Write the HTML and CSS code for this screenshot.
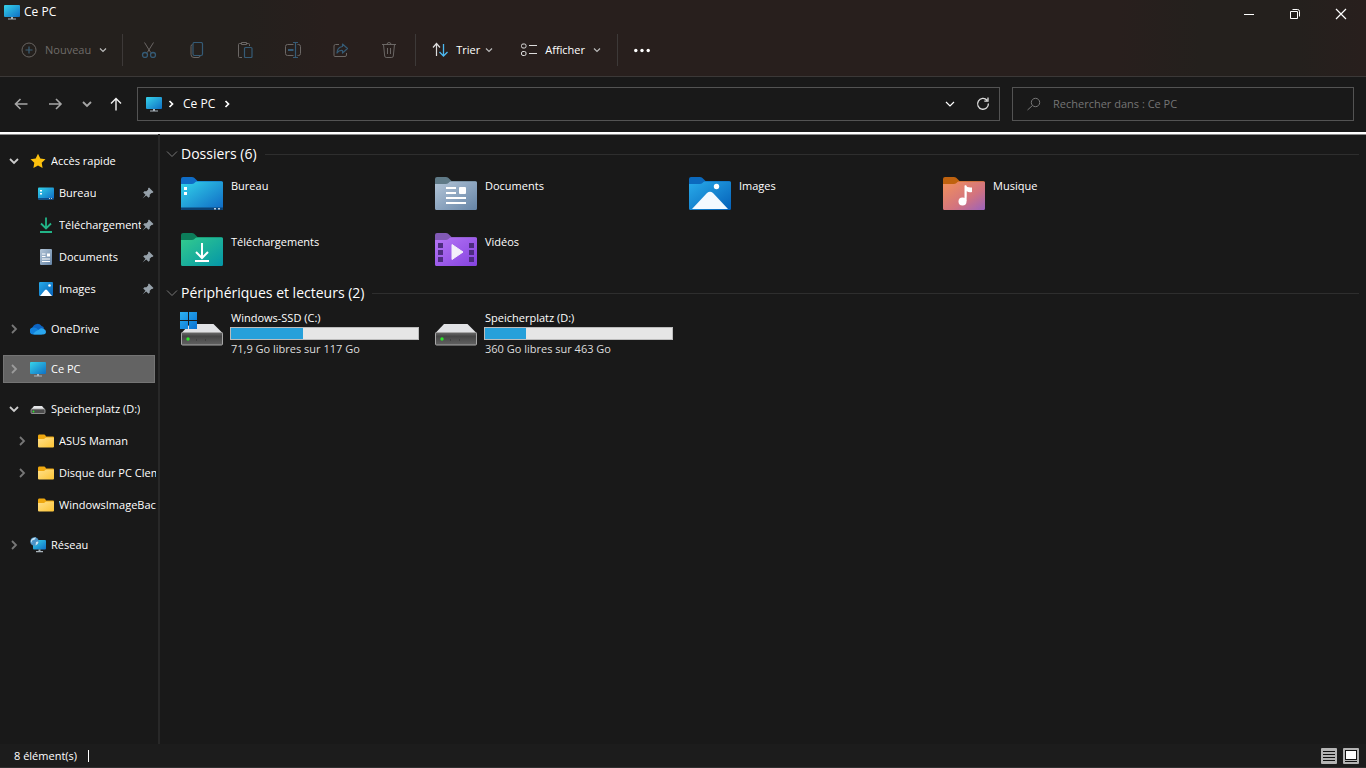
FILE: index.html
```html
<!DOCTYPE html>
<html lang="fr">
<head>
<meta charset="utf-8">
<meta name="viewport" content="width=device-width, initial-scale=1">
<title>Ce PC</title>
<link rel="stylesheet" href="styles.css">
</head>
<body>
<svg class="sprite" aria-hidden="true">
  <defs>
    <linearGradient id="g-screen" x1="0" y1="0" x2="1" y2="1"><stop offset="0" stop-color="#37d3ea"/><stop offset="1" stop-color="#0f6fc4"/></linearGradient>
    <linearGradient id="g-desk" x1="0" y1="0" x2="1" y2="1"><stop offset="0" stop-color="#33d3ea"/><stop offset="1" stop-color="#0f68c4"/></linearGradient>
    <linearGradient id="g-down" x1="0" y1="0" x2="1" y2="1"><stop offset="0" stop-color="#33cb8d"/><stop offset="1" stop-color="#0496a8"/></linearGradient>
    <linearGradient id="g-doc" x1="0" y1="0" x2="1" y2="1"><stop offset="0" stop-color="#b4c6d8"/><stop offset="1" stop-color="#6584a6"/></linearGradient>
    <linearGradient id="g-img" x1="0" y1="0" x2="1" y2="1"><stop offset="0" stop-color="#28abea"/><stop offset="1" stop-color="#0560b8"/></linearGradient>
    <linearGradient id="g-music" x1="0" y1="0" x2="1" y2="1"><stop offset="0" stop-color="#f3925a"/><stop offset=".6" stop-color="#d2737f"/><stop offset="1" stop-color="#9a62bd"/></linearGradient>
    <linearGradient id="g-video" x1="0" y1="0" x2="1" y2="1"><stop offset="0" stop-color="#b575f5"/><stop offset="1" stop-color="#8543e0"/></linearGradient>
    <linearGradient id="g-folder" x1="0" y1="0" x2="1" y2="1"><stop offset="0" stop-color="#ffe08a"/><stop offset="1" stop-color="#fcc435"/></linearGradient>
    <linearGradient id="g-disk" x1="0" y1="0" x2="0" y2="1"><stop offset="0" stop-color="#6a6a6a"/><stop offset=".3" stop-color="#454545"/><stop offset="1" stop-color="#626262"/></linearGradient>
    <linearGradient id="g-win" x1="0" y1="0" x2="1" y2="1"><stop offset="0" stop-color="#2cb0ef"/><stop offset="1" stop-color="#0872d4"/></linearGradient>
  </defs>
  <symbol id="pc" viewBox="0 0 16 16"><rect y="1" width="16" height="12" rx="1" fill="url(#g-screen)"/><path d="M7 13h2v1.500h3v1H4v-1h3z" fill="#aab4bb"/></symbol>
  <symbol id="chev-small" viewBox="0 0 12 12"><path d="M3 4.500l3 3 3-3" fill="none" stroke="currentColor" stroke-width="1.200"/></symbol>
  <symbol id="chev-down" viewBox="0 0 12 12"><path d="M2 4l4 4 4-4" fill="none" stroke="currentColor" stroke-width="1.200"/></symbol>
  <symbol id="chev-bold" viewBox="0 0 12 12"><path d="M2 4l4 4 4-4" fill="none" stroke="currentColor" stroke-width="1.800"/></symbol>
  <symbol id="chev-right" viewBox="0 0 12 12"><path d="M4 2l4 4-4 4" fill="none" stroke="currentColor" stroke-width="1.800"/></symbol>
  <symbol id="chev-crumb" viewBox="0 0 12 12"><path d="M4.500 3 7.500 6l-3 3" fill="none" stroke="currentColor" stroke-width="1.700"/></symbol>
  <symbol id="chev-wide" viewBox="0 0 12 12"><path d="M1 3.500l5 5 5-5" fill="none" stroke="currentColor"/></symbol>
  <symbol id="pin" viewBox="0 0 12 12"><path d="M7 .5 11.500 5l-1.200 1-.8-.1-1.800 1.800.1 1.900L6.600 10.800 4.200 8.500.5 11.600 3.500 7.800 1.200 5.400 2.400 4.200l2 .1L6.200 2.500 6 1.600z" fill="#96a1aa"/></symbol>
  <symbol id="folder" viewBox="0 0 16 16"><path d="M0 3q0-1.500 1-1.500h5q1 0 1.500 1L8 3.500h7q1 0 1 1v2H0z" fill="#efa80f"/><path d="M0 6h6l2-1.500h7.500q.5 0 .5.500v8.500q0 1-1 1H1q-1 0-1-1z" fill="url(#g-folder)"/></symbol>
  <symbol id="disk" viewBox="0 0 48 37"><path d="M12 13h23.500l9.500 9.500H3z" fill="#e1e2e5"/><rect x="3.500" y="21.500" width="41" height="12.500" rx="1" fill="url(#g-disk)" stroke="#a7a7a7"/><circle cx="10" cy="28" r="1.700" fill="#2ee52c"/><path d="M18 29h1m8 0h1" stroke="#333"/></symbol>
</svg>

<header class="chrome">
  <div class="titlebar">
    <h1 class="title"><svg class="i16" aria-hidden="true"><use href="#pc"/></svg>Ce PC</h1>
    <div class="window-buttons">
      <button type="button" aria-label="Réduire"><svg class="i16" viewBox="0 0 16 16"><path d="M3 8.500h10" stroke="#fff"/></svg></button>
      <button type="button" aria-label="Niveau inférieur"><svg class="i16" viewBox="0 0 16 16"><path d="M3.500 5.500h7v7h-7zM5.500 3.500h5q2 0 2 2v5" fill="none" stroke="#fff" stroke-linejoin="round"/></svg></button>
      <button type="button" aria-label="Fermer"><svg class="i16" viewBox="0 0 16 16"><path d="M3 3l10 10M13 3 3 13" stroke="#fff" stroke-width="1.200"/></svg></button>
    </div>
  </div>
  <div class="commands" role="toolbar" aria-label="Commandes">
    <button type="button" class="cmd new" disabled><svg class="i16" viewBox="0 0 16 16"><circle cx="8" cy="8" r="7" fill="none" stroke="#686461"/><path d="M4.500 8h7M8 4.500v7" stroke="#3d6178" stroke-width="1.200"/></svg><span>Nouveau</span><svg class="i12"><use href="#chev-small"/></svg></button>
    <span class="sep"></span>
    <div class="tools">
      <button type="button" class="tool" disabled aria-label="Couper"><svg class="i16" viewBox="0 0 16 16" fill="none"><path d="M3.500.5l6.200 10M12.500.5l-6.200 10" stroke="#6b6765"/><circle cx="4" cy="13" r="2.500" stroke="#355b76" stroke-width="1.300"/><circle cx="12" cy="13" r="2.500" stroke="#355b76" stroke-width="1.300"/></svg></button>
      <button type="button" class="tool" disabled aria-label="Copier"><svg class="i16" viewBox="0 0 16 16" fill="none"><path d="M3.500 2.500q-1.500 0-1.500 2v8q0 3 3 3h4q2 0 2-1.500" stroke="#6b6765"/><rect x="4" y=".5" width="9.500" height="13" rx="1.500" stroke="#355b76" stroke-width="1.200"/></svg></button>
      <button type="button" class="tool" disabled aria-label="Coller"><svg class="i16" viewBox="0 0 16 16" fill="none"><path d="M5 15.500H2.500q-1 0-1-1v-12q0-1 1-1h2m5 0h2q1 0 1 1V4M4.500.5h5v2h-5z" stroke="#6b6765"/><rect x="7.500" y="5.500" width="7.500" height="10" rx="1" stroke="#355b76" stroke-width="1.200"/></svg></button>
      <button type="button" class="tool" disabled aria-label="Renommer"><svg class="i16" viewBox="0 0 16 16" fill="none"><path d="M8.500 2.500h-6q-2 0-2 2v7q0 2 2 2h6m4-11h1q2 0 2 2v7q0 2-2 2h-1" stroke="#6b6765"/><path d="M3 8h5.500" stroke="#355b76" stroke-width="2"/><path d="M8 .5h5m-5 15h5M10.500.5v15" stroke="#355b76" stroke-width="1.200"/></svg></button>
      <button type="button" class="tool" disabled aria-label="Partager"><svg class="i16" viewBox="0 0 16 16" fill="none"><path d="M6 2.500H2.500q-1.500 0-1.500 1.500v9.500q0 1 1 1h10q1.500 0 1.500-1.500v-2" stroke="#6b6765"/><path d="M9.500 2l5 4.500-5 4.500V8.500Q6 8 4 11q0-5.500 5.500-6.500z" stroke="#355b76" stroke-width="1.200" stroke-linejoin="round"/></svg></button>
      <button type="button" class="tool" disabled aria-label="Supprimer"><svg class="i16" viewBox="0 0 16 16" fill="none"><path d="M1 2.500h14M2.500 2.500l1.200 11.500q.2 1.500 1.500 1.500h5.600q1.300 0 1.500-1.500l1.200-11.500M6 2.500q0-2 2-2t2 2M6.500 6v6m3-6v6" stroke="#6b6765"/></svg></button>
    </div>
    <span class="sep"></span>
    <button type="button" class="cmd sort"><svg class="i16" viewBox="0 0 16 16" fill="none"><path d="M1 5.500l3.500-4L8 5.500M4.500 2v12" stroke="#ddd" stroke-width="1.200"/><path d="M7.500 10l4 4L15.500 10M11.500 2v12" stroke="#4cb8f0" stroke-width="1.300"/></svg><span>Trier</span><svg class="i12"><use href="#chev-small"/></svg></button>
    <button type="button" class="cmd view"><svg class="i16" viewBox="0 0 16 16" fill="none" stroke="#ddd"><rect x=".5" y="2" width="4.500" height="4" rx="1.500"/><rect x=".5" y="9.500" width="4.500" height="4" rx="1.500"/><path d="M8 3.500h8M8 11.500h8"/></svg><span>Afficher</span><svg class="i12"><use href="#chev-small"/></svg></button>
    <span class="sep"></span>
    <button type="button" class="cmd more" aria-label="Voir plus"><svg class="i16" viewBox="0 0 16 16" fill="#fff"><circle cx="1.800" cy="8.500" r="1.700"/><circle cx="8" cy="8.500" r="1.700"/><circle cx="14.200" cy="8.500" r="1.700"/></svg></button>
  </div>
</header>

<nav class="navbar" aria-label="Navigation">
  <div class="history">
    <button type="button" class="wide" aria-label="Précédent"><svg class="i16" viewBox="0 0 16 16" fill="none" stroke="#a6a6a6" stroke-width="1.600"><path d="M7.500 3 2.500 8l5 5M2.500 8h12"/></svg></button>
    <button type="button" class="wide" aria-label="Suivant"><svg class="i16" viewBox="0 0 16 16" fill="none" stroke="#a6a6a6" stroke-width="1.600"><path d="M9 3l5 5-5 5M2 8h12"/></svg></button>
    <button type="button" class="dim" aria-label="Emplacements récents"><svg class="i12"><use href="#chev-bold"/></svg></button>
    <button type="button" aria-label="Dossier parent"><svg class="i16" viewBox="0 0 16 16" fill="none" stroke="#f2f2f2" stroke-width="1.400"><path d="M3 7.500l5-5 5 5M8 2.500v12"/></svg></button>
  </div>
  <div class="address">
    <svg class="i16" aria-hidden="true"><use href="#pc"/></svg>
    <svg class="i12 crumb-sep" aria-hidden="true"><use href="#chev-crumb"/></svg>
    <a class="crumb" href="#">Ce PC</a>
    <svg class="i12 crumb-sep" aria-hidden="true"><use href="#chev-crumb"/></svg>
    <span class="spacer"></span>
    <button type="button" aria-label="Historique"><svg class="i12"><use href="#chev-down"/></svg></button>
    <button type="button" aria-label="Actualiser"><svg class="i16" viewBox="0 0 16 16" fill="none" stroke="#ddd" stroke-width="1.300"><path d="M12 4.200A5.400 5.400 0 1 0 13.400 7.500M13 1.500v3.700H9.300"/></svg></button>
  </div>
  <label class="search"><svg class="i16" viewBox="0 0 16 16" fill="none" stroke="#777" aria-hidden="true"><circle cx="9.500" cy="6.500" r="4.200"/><path d="M6.500 9.500 1.500 14"/></svg><input type="search" aria-label="Rechercher" placeholder="Rechercher dans : Ce PC"></label>
</nav>

<div class="body">
  <aside class="sidebar">
    <ul class="tree">
      <li><div class="row"><button type="button" class="exp open" aria-label="Réduire"><svg class="i12"><use href="#chev-bold"/></svg></button><a href="#"><svg class="i16" viewBox="0 0 16 16"><path d="M8 .8l2.300 4.700 5.200.7-3.800 3.600.9 5.200L8 12.500 3.400 15l.9-5.200L.5 6.200l5.200-.7z" fill="#fcc10e"/></svg><span>Accès rapide</span></a></div>
        <ul>
          <li><div class="row"><a href="#"><svg class="i16" viewBox="0 0 16 16"><rect y="2.500" width="16" height="12" rx="1" fill="url(#g-desk)"/><path d="M2 5h2v1.500H2zm0 3h2v1.500H2z" fill="#fff"/><path d="M0 13h16v.5q0 1-1 1H1q-1 0-1-1z" fill="#0d4f8f"/><path d="M11 13h1v1h-1zm2 0h1v1h-1z" fill="#ccc"/></svg><span>Bureau</span></a><svg class="pin"><use href="#pin"/></svg></div></li>
          <li><div class="row"><a href="#"><svg class="i16" viewBox="0 0 16 16" fill="none" stroke="#22b487" stroke-width="1.800"><path d="M8 .5V11M3 6.500l5 5 5-5M2 15h12"/></svg><span>Téléchargements</span></a><svg class="pin"><use href="#pin"/></svg></div></li>
          <li><div class="row"><a href="#"><svg class="i16" viewBox="0 0 16 16"><rect x="2" width="12" height="16" rx="1" fill="url(#g-doc)"/><path d="M4 5h3.500M4 7.500h3.500M4 10h8M4 12.500h8" stroke="#fff" stroke-width="1.200"/><path d="M9 4.500h3v3H9z" fill="#fff"/></svg><span>Documents</span></a><svg class="pin"><use href="#pin"/></svg></div></li>
          <li><div class="row"><a href="#"><svg class="i16" viewBox="0 0 16 16"><rect x="1" y="1" width="14" height="14" rx="1" fill="url(#g-img)"/><path d="M2 15l5-6q1-1 2 0l5 6z" fill="#fff"/><circle cx="11.500" cy="4.500" r="1.300" fill="#fff"/></svg><span>Images</span></a><svg class="pin"><use href="#pin"/></svg></div></li>
        </ul></li>
      <li><div class="row"><button type="button" class="exp" aria-label="Développer"><svg class="i12"><use href="#chev-right"/></svg></button><a href="#"><svg class="i16" viewBox="0 0 16 16"><path d="M3 11a4 4 0 0 1 0-5.500 5 5 0 0 1 8.500-.5q2 .3 2.700 2.500z" fill="#0d63c0"/><path d="M3.500 13.500A3.500 3.500 0 0 1 3 6.500q3-.5 5 2l4 5z" fill="#1180dc"/><path d="M4.500 13.500 3 13q2-3 6-4.500 2-2 4.500-.8Q16 8.500 16 10.800q0 2.700-3 2.700z" fill="#2aa6ee"/></svg><span>OneDrive</span></a></div></li>
      <li><div class="row selected" aria-current="page"><button type="button" class="exp" aria-label="Développer"><svg class="i12"><use href="#chev-right"/></svg></button><a href="#"><svg class="i16"><use href="#pc"/></svg><span>Ce PC</span></a></div></li>
      <li><div class="row"><button type="button" class="exp open" aria-label="Réduire"><svg class="i12"><use href="#chev-bold"/></svg></button><a href="#"><svg class="i16" viewBox="0 0 16 16"><path d="M4 5h8l3 3.500H1z" fill="#e4e5e7"/><rect x="1" y="8" width="14" height="4.500" rx="1" fill="#4c4c4c" stroke="#a5a5a5" stroke-width=".8"/><circle cx="3.500" cy="10.500" r=".9" fill="#2ee52c"/></svg><span>Speicherplatz (D:)</span></a></div>
        <ul>
          <li><div class="row"><button type="button" class="exp" aria-label="Développer"><svg class="i12"><use href="#chev-right"/></svg></button><a href="#"><svg class="i16"><use href="#folder"/></svg><span>ASUS Maman</span></a></div></li>
          <li><div class="row"><button type="button" class="exp" aria-label="Développer"><svg class="i12"><use href="#chev-right"/></svg></button><a href="#"><svg class="i16"><use href="#folder"/></svg><span>Disque dur PC Clement</span></a></div></li>
          <li><div class="row"><a href="#"><svg class="i16"><use href="#folder"/></svg><span>WindowsImageBackup</span></a></div></li>
        </ul></li>
      <li><div class="row"><button type="button" class="exp" aria-label="Développer"><svg class="i12"><use href="#chev-right"/></svg></button><a href="#"><svg class="i16" viewBox="0 0 16 16"><rect x="3" y="3" width="13" height="9.500" rx="1" fill="url(#g-screen)"/><path d="M8.500 12.500h2V14H13v1.200H6V14h2.500z" fill="#aab4bb"/><circle cx="4.500" cy="4.500" r="4.300" fill="#4a93c8"/><path d="M1 3q2-3 5-2.500Q5 3 3 3.200T2.500 6Q.5 5.500 1 3zm5 2q2-1 2.500 0Q8 8 5.500 8.500z" fill="#c9e4f2"/></svg><span>Réseau</span></a></div></li>
    </ul>
  </aside>

  <main class="content">
    <section>
      <h2 class="group"><svg class="i12"><use href="#chev-wide"/></svg>Dossiers (6)</h2>
      <div class="tiles">
        <a class="tile" href="#"><svg class="i48" viewBox="0 0 48 48"><path d="M3 9q0-2 2-2h9q2 0 3.500 2l2 2H43q2 0 2 2v4H3z" fill="#0f6cc6"/><path d="M3 14h11q2 0 3.500-2l1-.5H44q1 0 1 1.500v25.500q0 1.500-1.500 1.500h-39Q3 40 3 38.500z" fill="url(#g-desk)"/><path d="M3 37.500h42V39q0 1-1 1H4q-1 0-1-1z" fill="#0b4274"/><path d="M6 17h3v3H6zm0 5h3v3H6z" fill="#fff"/><path d="M36 38h2v1.500h-2zm4 0h2v1.500h-2z" fill="#bcd"/></svg><span>Bureau</span></a>
        <a class="tile" href="#"><svg class="i48" viewBox="0 0 48 48"><path d="M3 9q0-2 2-2h9q2 0 3.500 2l2 2H43q2 0 2 2v4H3z" fill="#5f7a87"/><path d="M3 14h11q2 0 3.500-2l1-.5H44q1 0 1 1.500v25.500q0 1.500-1.500 1.500h-39Q3 40 3 38.500z" fill="url(#g-doc)"/><path d="M14 18h10M14 23h10M14 28h20M14 33h20" stroke="#fff" stroke-width="2"/><rect x="27" y="17" width="7" height="7" rx="1" fill="#fff"/></svg><span>Documents</span></a>
        <a class="tile" href="#"><svg class="i48" viewBox="0 0 48 48"><path d="M3 9q0-2 2-2h9q2 0 3.500 2l2 2H43q2 0 2 2v4H3z" fill="#0b69bd"/><path d="M3 14h11q2 0 3.500-2l1-.5H44q1 0 1 1.500v25.500q0 1.500-1.500 1.500h-39Q3 40 3 38.500z" fill="url(#g-img)"/><path d="M6 39l15-16q3-2.500 6 0l15 16z" fill="#f3f9ff"/><circle cx="30.500" cy="16.500" r="2.700" fill="#fff"/></svg><span>Images</span></a>
        <a class="tile" href="#"><svg class="i48" viewBox="0 0 48 48"><path d="M3 9q0-2 2-2h9q2 0 3.500 2l2 2H43q2 0 2 2v4H3z" fill="#bf620f"/><path d="M3 14h11q2 0 3.500-2l1-.5H44q1 0 1 1.500v25.500q0 1.500-1.500 1.500h-39Q3 40 3 38.500z" fill="url(#g-music)"/><path d="M25 15q2 3 7 2.500v4.500q-3 1-5.500-1V31" fill="#fff"/><path d="M25.500 15.500V31" stroke="#fff" stroke-width="2"/><circle cx="22.500" cy="31.500" r="4" fill="#fff"/></svg><span>Musique</span></a>
        <a class="tile" href="#"><svg class="i48" viewBox="0 0 48 48"><path d="M3 9q0-2 2-2h9q2 0 3.500 2l2 2H43q2 0 2 2v4H3z" fill="#0c7d5a"/><path d="M3 14h11q2 0 3.500-2l1-.5H44q1 0 1 1.500v25.500q0 1.500-1.500 1.500h-39Q3 40 3 38.500z" fill="url(#g-down)"/><path d="M24 17v14M18 26l6 6 6-6M17 35h14" fill="none" stroke="#fff" stroke-width="2"/></svg><span>Téléchargements</span></a>
        <a class="tile" href="#"><svg class="i48" viewBox="0 0 48 48"><path d="M3 9q0-2 2-2h9q2 0 3.500 2l2 2H43q2 0 2 2v4H3z" fill="#8159b5"/><path d="M3 14h11q2 0 3.500-2l1-.5H44q1 0 1 1.500v25.500q0 1.500-1.500 1.500h-39Q3 40 3 38.500z" fill="url(#g-video)"/><path d="M6 17h5v5H6zm0 7h5v5H6zm0 7h5v5H6zM37 17h5v5h-5zm0 7h5v5h-5zm0 7h5v5h-5z" fill="#4d2c80"/><path d="M20 18.500 31 26 20 33.500z" fill="#f3effa" stroke="#f3effa" stroke-linejoin="round"/></svg><span>Vidéos</span></a>
      </div>
    </section>
    <section>
      <h2 class="group"><svg class="i12"><use href="#chev-wide"/></svg>Périphériques et lecteurs (2)</h2>
      <div class="tiles">
        <a class="tile drive" href="#"><svg class="disk" viewBox="0 0 48 40"><use href="#disk" y="2" width="48" height="37"/><path d="M2 3h8v8H2zm9 0h8v8h-8zm-9 9h8v8H2zm9 0h8v8h-8z" fill="url(#g-win)"/></svg>
          <span class="info"><span>Windows-SSD (C:)</span><span class="bar"><span class="fill" style="width:38.500%"></span></span><span class="free">71,9 Go libres sur 117 Go</span></span></a>
        <a class="tile drive" href="#"><svg class="disk" viewBox="0 0 48 40"><use href="#disk" y="2" width="48" height="37"/></svg>
          <span class="info"><span>Speicherplatz (D:)</span><span class="bar"><span class="fill" style="width:22%"></span></span><span class="free">360 Go libres sur 463 Go</span></span></a>
      </div>
    </section>
  </main>
</div>

<footer class="status">
  <span class="count">8 élément(s)</span>
  <div class="views">
    <button type="button" aria-label="Détails"><svg viewBox="0 0 16 16"><rect width="16" height="16" rx="1" fill="#b4b4b4"/><path d="M2 3.500h12M2 6.500h12M2 9.500h12M2 12.500h12" stroke="#111"/></svg></button>
    <button type="button" aria-label="Grandes icônes"><svg viewBox="0 0 16 16"><rect width="16" height="16" rx="1" fill="#b4b4b4"/><rect x="2.500" y="2.500" width="11" height="9" fill="#fff" stroke="#111"/><path d="M2 13.500h12" stroke="#111"/></svg></button>
  </div>
</footer>
</body>
</html>
```
FILE: styles.css
```css
* { box-sizing: border-box; }

body {
  margin: 0;
  height: 100vh;
  display: flex;
  flex-direction: column;
  background: #191919;
  color: #fff;
  font: 11px/16px "Open Sans", "Noto Sans", sans-serif;
}

button {
  display: flex;
  align-items: center;
  justify-content: center;
  padding: 0;
  border: 0;
  background: none;
  color: inherit;
  font: inherit;
}

a { color: inherit; text-decoration: none; }
ul { margin: 0; padding: 0; list-style: none; }
svg { display: block; flex: none; }
h1, h2 { margin: 0; font-weight: 400; }

.sprite { position: absolute; width: 0; height: 0; }
.i12 { width: 12px; height: 12px; }
.i16 { width: 16px; height: 16px; }
.i48 { width: 48px; height: 48px; }

/* Title bar and commands */
.chrome {
  border-bottom: 1px solid #3b3837;
  background: linear-gradient(90deg, #24201d 0%, #24201d 18%, #281f1d 24%, #281f1d 82%, #24201d 88%, #24201d 95%, #281f1d 100%);
}
.titlebar { display: flex; justify-content: space-between; height: 28px; }
.title { display: flex; align-items: center; gap: 4px; padding: 0 0 4px 4px; font-size: 12px; }
.window-buttons { display: flex; padding-right: 2px; }
.window-buttons button { width: 46px; }

.commands { display: flex; align-items: center; height: 48px; padding: 0 0 4px 21px; }
.cmd { gap: 8px; }
.cmd .i12 { color: #bbb; margin-left: -5px; }
.cmd.new .i12, .cmd.view .i12 { margin-left: -2px; }
.new { color: #6f6b69; margin-right: 13px; }
.sep { width: 1px; height: 32px; background: #3d3938; }
.tools { display: flex; padding: 0 2px; }
.tool { width: 48px; height: 32px; }
.sort { margin: 0 26px 0 16px; }
.view { margin-right: 14px; }
.more { margin-left: 16px; }

/* Navigation bar */
.navbar {
  display: flex;
  align-items: center;
  height: 57px;
  padding: 10px 12px 11px 4px;
  border-bottom: 2px solid #fff;
  box-shadow: 0 1px #8c8c8c;
}
.history { display: flex; width: 133px; }
.history button { width: 29px; height: 28px; }
.history .wide { width: 34px; }
.dim { color: #a6a6a6; }
.address, .search {
  display: flex;
  align-items: center;
  height: 34px;
  border: 1px solid #535353;
}
.address { flex: 1; padding: 0 0 0 8px; }
.address button { width: 33px; height: 32px; }
.crumb-sep { margin: 0 3px; }
.crumb { margin: 0 3px; font-size: 12px; }
.spacer { flex: 1; }
.search { flex: 0 0 342px; margin-left: 12px; padding: 0 13px; gap: 11px; }
.search input {
  flex: 1;
  min-width: 0;
  padding: 0;
  border: 0;
  outline: 0;
  background: none;
  color: #fff;
  font: inherit;
}
.search input::placeholder { color: #757575; opacity: 1; }

/* Tree */
.body { flex: 1; display: flex; min-height: 0; }
.sidebar {
  flex: 0 0 160px;
  overflow: hidden;
  padding: 13px 2px 0 3px;
  border-right: 2px solid #282828;
}
.tree > li { display: flow-root; margin-bottom: 8px; }
.row { display: flex; align-items: center; height: 28px; padding-left: 27px; }
.row a { flex: 1; display: flex; align-items: center; gap: 5px; min-width: 0; overflow: hidden; }
.row a span { overflow: hidden; white-space: nowrap; }
.tree li { padding-bottom: 4px; }
.tree ul { padding-top: 4px; margin-bottom: -4px; }
.tree ul .row { padding-left: 35px; }
.exp { width: 20px; height: 20px; margin: 0 6px 0 -26px; color: #777; }
.open { color: #ccc; }
.selected { margin-right: 1px; background: #636363; box-shadow: inset 0 0 0 1px #747474; }
.selected .exp { color: #9b9b9b; }
.pin { width: 12px; height: 12px; margin: 0 2px 0 1px; }

/* Content */
.content { flex: 1; padding: 9px 7px 0 6px; overflow: hidden; }
.group { display: flex; align-items: center; gap: 3px; height: 22px; font-size: 14px; }
.group svg { color: #777; }
.group::after { content: ""; flex: 1; height: 1px; margin-left: 5px; background: #2e2e2e; }
.tiles { display: grid; grid-template-columns: repeat(auto-fill, 254px); padding: 5px 0 0 12px; }
.tile { display: flex; align-items: flex-start; gap: 5px; height: 56px; }
.tile > span { padding-top: 8px; }
.disk { width: 48px; height: 40px; }
.tile .info { display: flex; flex-direction: column; flex: 0 0 189px; padding-top: 1px; }
.drive { gap: 4px; }
.info > span { padding-left: 1px; }
.info .bar { height: 13px; margin-top: 1px; padding: 0; border: 1px solid #bcbcbc; background: #e6e6e6; }
.fill { display: block; height: 11px; background: #26a0da; }
.info .free { margin-top: 1px; color: #dedede; }

/* Status bar */
.status {
  display: flex;
  align-items: center;
  justify-content: space-between;
  height: 24px;
  padding: 0 7px 0 14px;
  border-bottom: 1px solid #303030;
  background: #1c1c1c;
}
.count { padding-right: 11px; border-right: 1px solid #fff; line-height: 12px; }
.views { display: flex; gap: 6px; }
.views svg { width: 16px; height: 16px; }
```
